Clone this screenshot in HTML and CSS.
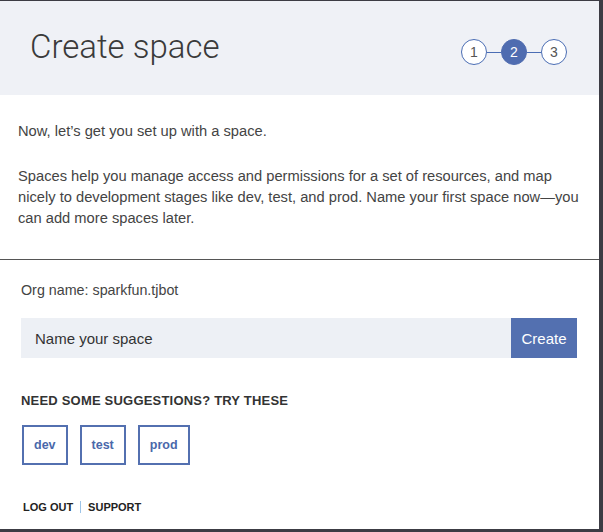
FILE: index.html
```html
<!DOCTYPE html>
<html>
<head>
<meta charset="utf-8">
<link rel="stylesheet" href="styles.css">
</head>
<body>
<div class="frame">
  <header class="head">
    <h1 class="title">Create space</h1>
    <div class="steps">
      <span class="step">1</span>
      <span class="link"></span>
      <span class="step active">2</span>
      <span class="link"></span>
      <span class="step">3</span>
    </div>
  </header>
  <section class="intro">
    <p class="lead">Now, let’s get you set up with a space.</p>
    <p class="desc">Spaces help you manage access and permissions for a set of resources, and map nicely to development stages like dev, test, and prod. Name your first space now&#8288;—&#8288;you can add more spaces later.</p>
  </section>
  <section class="form">
    <p class="org">Org name: sparkfun.tjbot</p>
    <div class="field">
      <div class="input">Name your space</div>
      <button class="create">Create</button>
    </div>
    <h2 class="sugg">NEED SOME SUGGESTIONS? TRY THESE</h2>
    <div class="chips">
      <span class="chip">dev</span>
      <span class="chip">test</span>
      <span class="chip">prod</span>
    </div>
    <div class="foot">
      <span>LOG OUT</span>
      <span class="sep"></span>
      <span>SUPPORT</span>
    </div>
  </section>
</div>
</body>
</html>
```
FILE: styles.css
```css
* { box-sizing: border-box; }
html, body { margin: 0; padding: 0; background: #3c3c44; }
body { font-family: "Liberation Sans", Arial, sans-serif; color: #3d3d3d; }
.frame {
  width: 603px;
  height: 532px;
  border-top: 1px solid #3c3c44;
  border-right: 4px solid #3c3c44;
  border-bottom: 3px solid #3c3c44;
  background: #fff;
  display: flex;
  flex-direction: column;
}
.head {
  height: 94px;
  background: #eff1f6;
  display: flex;
  align-items: center;
  justify-content: space-between;
  padding: 0 32px 0 31px;
}
.title {
  margin: 0 0 4px -1px;
  font-family: Roboto, "Liberation Sans", sans-serif;
  font-weight: 300;
  font-size: 33px;
  color: #3a3a3a;
  letter-spacing: 0;
}
.steps { display: flex; align-items: center; margin-top: 8px; }
.step {
  width: 26px; height: 26px;
  border: 1px solid #4a6db4;
  border-radius: 50%;
  display: flex; align-items: center; justify-content: center;
  font-size: 14px;
  color: #555;
  background: #fff;
}
.step.active { background: #4f6cb0; color: #fff; border-color: #4f6cb0; }
.link { width: 14px; height: 1px; background: #4a6db4; }
.intro {
  height: 165px;
  border-bottom: 1px solid #555;
  padding: 26px 14px 0 18px;
  font-size: 14.7px;
  line-height: 21px;
  color: #444;
}
.intro p { margin: 0; }
.lead { margin-bottom: 24px !important; }
.form { padding: 19px 22px 0 21px; }
.org { margin: 0; font-size: 14.3px; line-height: 22px; color: #444; }
.field { display: flex; margin-top: 17px; height: 40px; }
.input {
  flex: 1;
  background: #edf0f5;
  display: flex; align-items: center;
  padding-left: 14px;
  font-size: 15px;
  color: #333;
}
.create {
  width: 66px;
  border: 0;
  background: #5370b0;
  color: #fff;
  font-family: inherit;
  font-size: 15px;
  padding: 0;
}
.sugg {
  margin: 35px 0 0 0;
  font-size: 13px;
  font-weight: bold;
  color: #333;
  letter-spacing: 0.2px;
  line-height: 16px;
}
.chips { display: flex; gap: 12px; margin-top: 16px; padding-left: 1px; }
.chip {
  height: 40px;
  border: 2px solid #5370b0;
  padding: 0 10px;
  display: flex; align-items: center;
  font-size: 12.5px;
  font-weight: bold;
  color: #4a68aa;
}
.foot {
  margin-top: 36px;
  padding-left: 2px;
  display: flex; align-items: center; gap: 7px;
  font-size: 11px;
  font-weight: bold;
  color: #222;
}
.sep { width: 1px; height: 12px; background: #9cc4e8; }
```
